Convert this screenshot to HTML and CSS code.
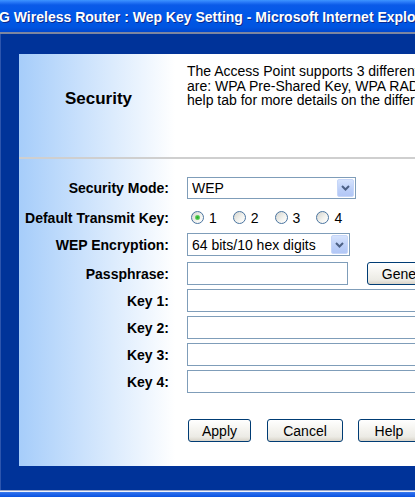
FILE: index.html
```html
<!DOCTYPE html>
<html>
<head>
<meta charset="utf-8">
<title>Wep Key Setting</title>
<link rel="stylesheet" href="styles.css">
</head>
<body>
<div class="window">
  <div class="titlebar"><span class="title">G Wireless Router : Wep Key Setting - Microsoft Internet Explorer</span></div>
  <div class="frame">
    <div class="panel">
      <div class="head">
        <div class="head-left"><h1>Security</h1></div>
        <div class="head-right">
          <p>The Access Point supports 3 different security modes. They<br>are: WPA Pre-Shared Key, WPA RADIUS, and WEP. Please see the<br>help tab for more details on the different security modes.</p>
        </div>
      </div>
      <form class="form">
        <div class="row r-sel1">
          <label class="lbl">Security Mode:</label>
          <div class="ctl">
            <div class="sel sel1">
              <select><option>WEP</option><option>WPA Pre-Shared Key</option><option>WPA RADIUS</option><option>Disable</option></select>
              <span class="arrow"><svg width="9" height="6" viewBox="0 0 9 6"><path d="M1 1 L4.5 4.5 L8 1" stroke="#4d6185" stroke-width="2" fill="none"/></svg></span>
            </div>
          </div>
        </div>
        <div class="row r-radio">
          <label class="lbl">Default Transmit Key:</label>
          <div class="ctl radios">
            <label class="ritem"><input type="radio" name="dk" checked>1</label>
            <label class="ritem"><input type="radio" name="dk">2</label>
            <label class="ritem"><input type="radio" name="dk">3</label>
            <label class="ritem"><input type="radio" name="dk">4</label>
          </div>
        </div>
        <div class="row r-sel2">
          <label class="lbl">WEP Encryption:</label>
          <div class="ctl">
            <div class="sel sel2">
              <select><option>64 bits/10 hex digits</option><option>128 bits/26 hex digits</option></select>
              <span class="arrow"><svg width="9" height="6" viewBox="0 0 9 6"><path d="M1 1 L4.5 4.5 L8 1" stroke="#4d6185" stroke-width="2" fill="none"/></svg></span>
            </div>
          </div>
        </div>
        <div class="row r-pass">
          <label class="lbl">Passphrase:</label>
          <div class="ctl">
            <input type="text" class="txt pass">
            <button type="button" class="btn gen">Generate</button>
          </div>
        </div>
        <div class="row">
          <label class="lbl">Key 1:</label>
          <div class="ctl"><input type="text" class="txt key"></div>
        </div>
        <div class="row">
          <label class="lbl">Key 2:</label>
          <div class="ctl"><input type="text" class="txt key"></div>
        </div>
        <div class="row">
          <label class="lbl">Key 3:</label>
          <div class="ctl"><input type="text" class="txt key"></div>
        </div>
        <div class="row">
          <label class="lbl">Key 4:</label>
          <div class="ctl"><input type="text" class="txt key"></div>
        </div>
        <div class="row r-btns">
          <span class="lbl"></span>
          <div class="ctl btns">
            <button type="button" class="btn apply">Apply</button>
            <button type="button" class="btn cancel">Cancel</button>
            <button type="button" class="btn help">Help</button>
          </div>
        </div>
      </form>
    </div>
  </div>
  <div class="bottombar"></div>
</div>
</body>
</html>
```

FILE: styles.css
```css
html, body {
  margin: 0;
  padding: 0;
  overflow: hidden;
  background: #003399;
  font-family: "Liberation Sans", Arial, sans-serif;
}

.window {
  width: 640px;
}

.titlebar {
  height: 34px;
  box-sizing: border-box;
  background: linear-gradient(#3d95ff 0, #2a7bf8 2px, #0a5ae8 5px, #0058e8 50%, #0054e0 85%, #0048d0 100%);
  border-bottom: 2px solid #7d86a0;
  overflow: hidden;
  white-space: nowrap;
}

.title {
  display: block;
  margin-left: -1px;
  padding-top: 9px;
  line-height: 16px;
  font-size: 14px;
  font-weight: bold;
  color: #fff;
  text-shadow: 1px 1px 0 #0c2a8c;
}

.frame {
  background: #003399;
  border-left: 1px solid #2d55ad;
  padding: 20px 0 24px 18px;
}

.panel {
  width: 620px;
  background: linear-gradient(90deg, #a6cdfa 0, #fff 156px);
}

.head {
  display: grid;
  grid-template-columns: 159px 1fr;
  height: 105px;
  box-sizing: border-box;
  border-bottom: 2px solid #cfcfcf;
}

.head-left {
  display: flex;
  align-items: center;
  justify-content: center;
  padding-bottom: 14px;
}

.head-left h1 {
  margin: 0;
  font-size: 17px;
  font-weight: bold;
  color: #000;
}

.head-right p {
  margin: 0;
  padding: 10px 0 0 9px;
  font-size: 14px;
  line-height: 14.5px;
  white-space: nowrap;
  color: #000;
}

.form {
  margin: 0;
  padding: 18px 0 24px 0;
  display: flex;
  flex-direction: column;
  gap: 4px;
}

.row {
  display: grid;
  grid-template-columns: 159px 1fr;
  align-items: center;
  height: 23px;
}

.r-sel1 { height: 22px; }
.r-radio { height: 26px; padding-top: 3px; box-sizing: border-box; }
.r-pass { margin-top: 2px; }
.r-btns { margin-top: 22px; }

.lbl {
  text-align: right;
  padding-right: 9px;
  font-size: 14px;
  font-weight: bold;
  color: #000;
  white-space: nowrap;
}

.ctl {
  padding-left: 9px;
  display: flex;
  align-items: center;
  height: 100%;
}

.sel {
  position: relative;
  height: 100%;
}
.sel1 { width: 169px; }
.sel2 { width: 163px; }

.sel select {
  appearance: none;
  -webkit-appearance: none;
  width: 100%;
  height: 100%;
  box-sizing: border-box;
  border: 1px solid #7f9db9;
  border-radius: 0;
  background: #fff;
  margin: 0;
  padding: 0 0 0 4px;
  font-family: "Liberation Sans", Arial, sans-serif;
  font-size: 14px;
  color: #000;
}

.arrow {
  position: absolute;
  right: 2px;
  top: 2px;
  bottom: 2px;
  width: 17px;
  box-sizing: border-box;
  border: 1px solid #c6d6f8;
  border-radius: 2px;
  background: linear-gradient(#d6e3fd, #bccff8 60%, #b2c7f6);
  display: flex;
  align-items: center;
  justify-content: center;
  pointer-events: none;
}

.radios {
  padding-left: 13px;
  font-size: 14px;
  color: #000;
}

.ritem {
  display: flex;
  align-items: center;
  margin-right: 16px;
}

.ritem input {
  appearance: none;
  -webkit-appearance: none;
  width: 13px;
  height: 13px;
  margin: 0 5px 0 0;
  box-sizing: border-box;
  border: 1px solid #4a74a0;
  border-radius: 50%;
  background: linear-gradient(135deg, #d4d4ce, #f4f4f0 60%, #fff);
}

.ritem input:checked {
  background: radial-gradient(circle, #24a824 0, #49c449 1.6px, #8ad88a 2.4px, rgba(255,255,255,0) 3px), linear-gradient(135deg, #d4d4ce, #f4f4f0 60%, #fff);
}

.txt {
  height: 23px;
  box-sizing: border-box;
  border: 1px solid #7f9db9;
  margin: 0;
  padding: 0 4px;
  background: #fff;
  font-family: "Liberation Sans", Arial, sans-serif;
  font-size: 14px;
}
.pass { width: 161px; }
.key { width: 320px; }

.btn {
  height: 23px;
  box-sizing: border-box;
  border: 1px solid #003c74;
  border-radius: 3px;
  background: linear-gradient(#ffffff, #f6f5f1 40%, #ecebe5 80%, #d8d3c8);
  padding: 0;
  margin: 0;
  font-family: "Liberation Sans", Arial, sans-serif;
  font-size: 14px;
  color: #000;
}
.gen { width: 88px; margin-left: 19px; }
.apply { width: 63px; margin-left: 1px; }
.cancel { width: 76px; margin-left: 16px; }
.help { width: 62px; margin-left: 15px; }

.bottombar {
  height: 7px;
  box-sizing: border-box;
  border-top: 1px solid #9aa6c8;
  background: linear-gradient(#eef2fc 0, #eef2fc 1px, #3f7ff0 1px, #2a6cec 2px, #0a52e0 100%);
}
```
